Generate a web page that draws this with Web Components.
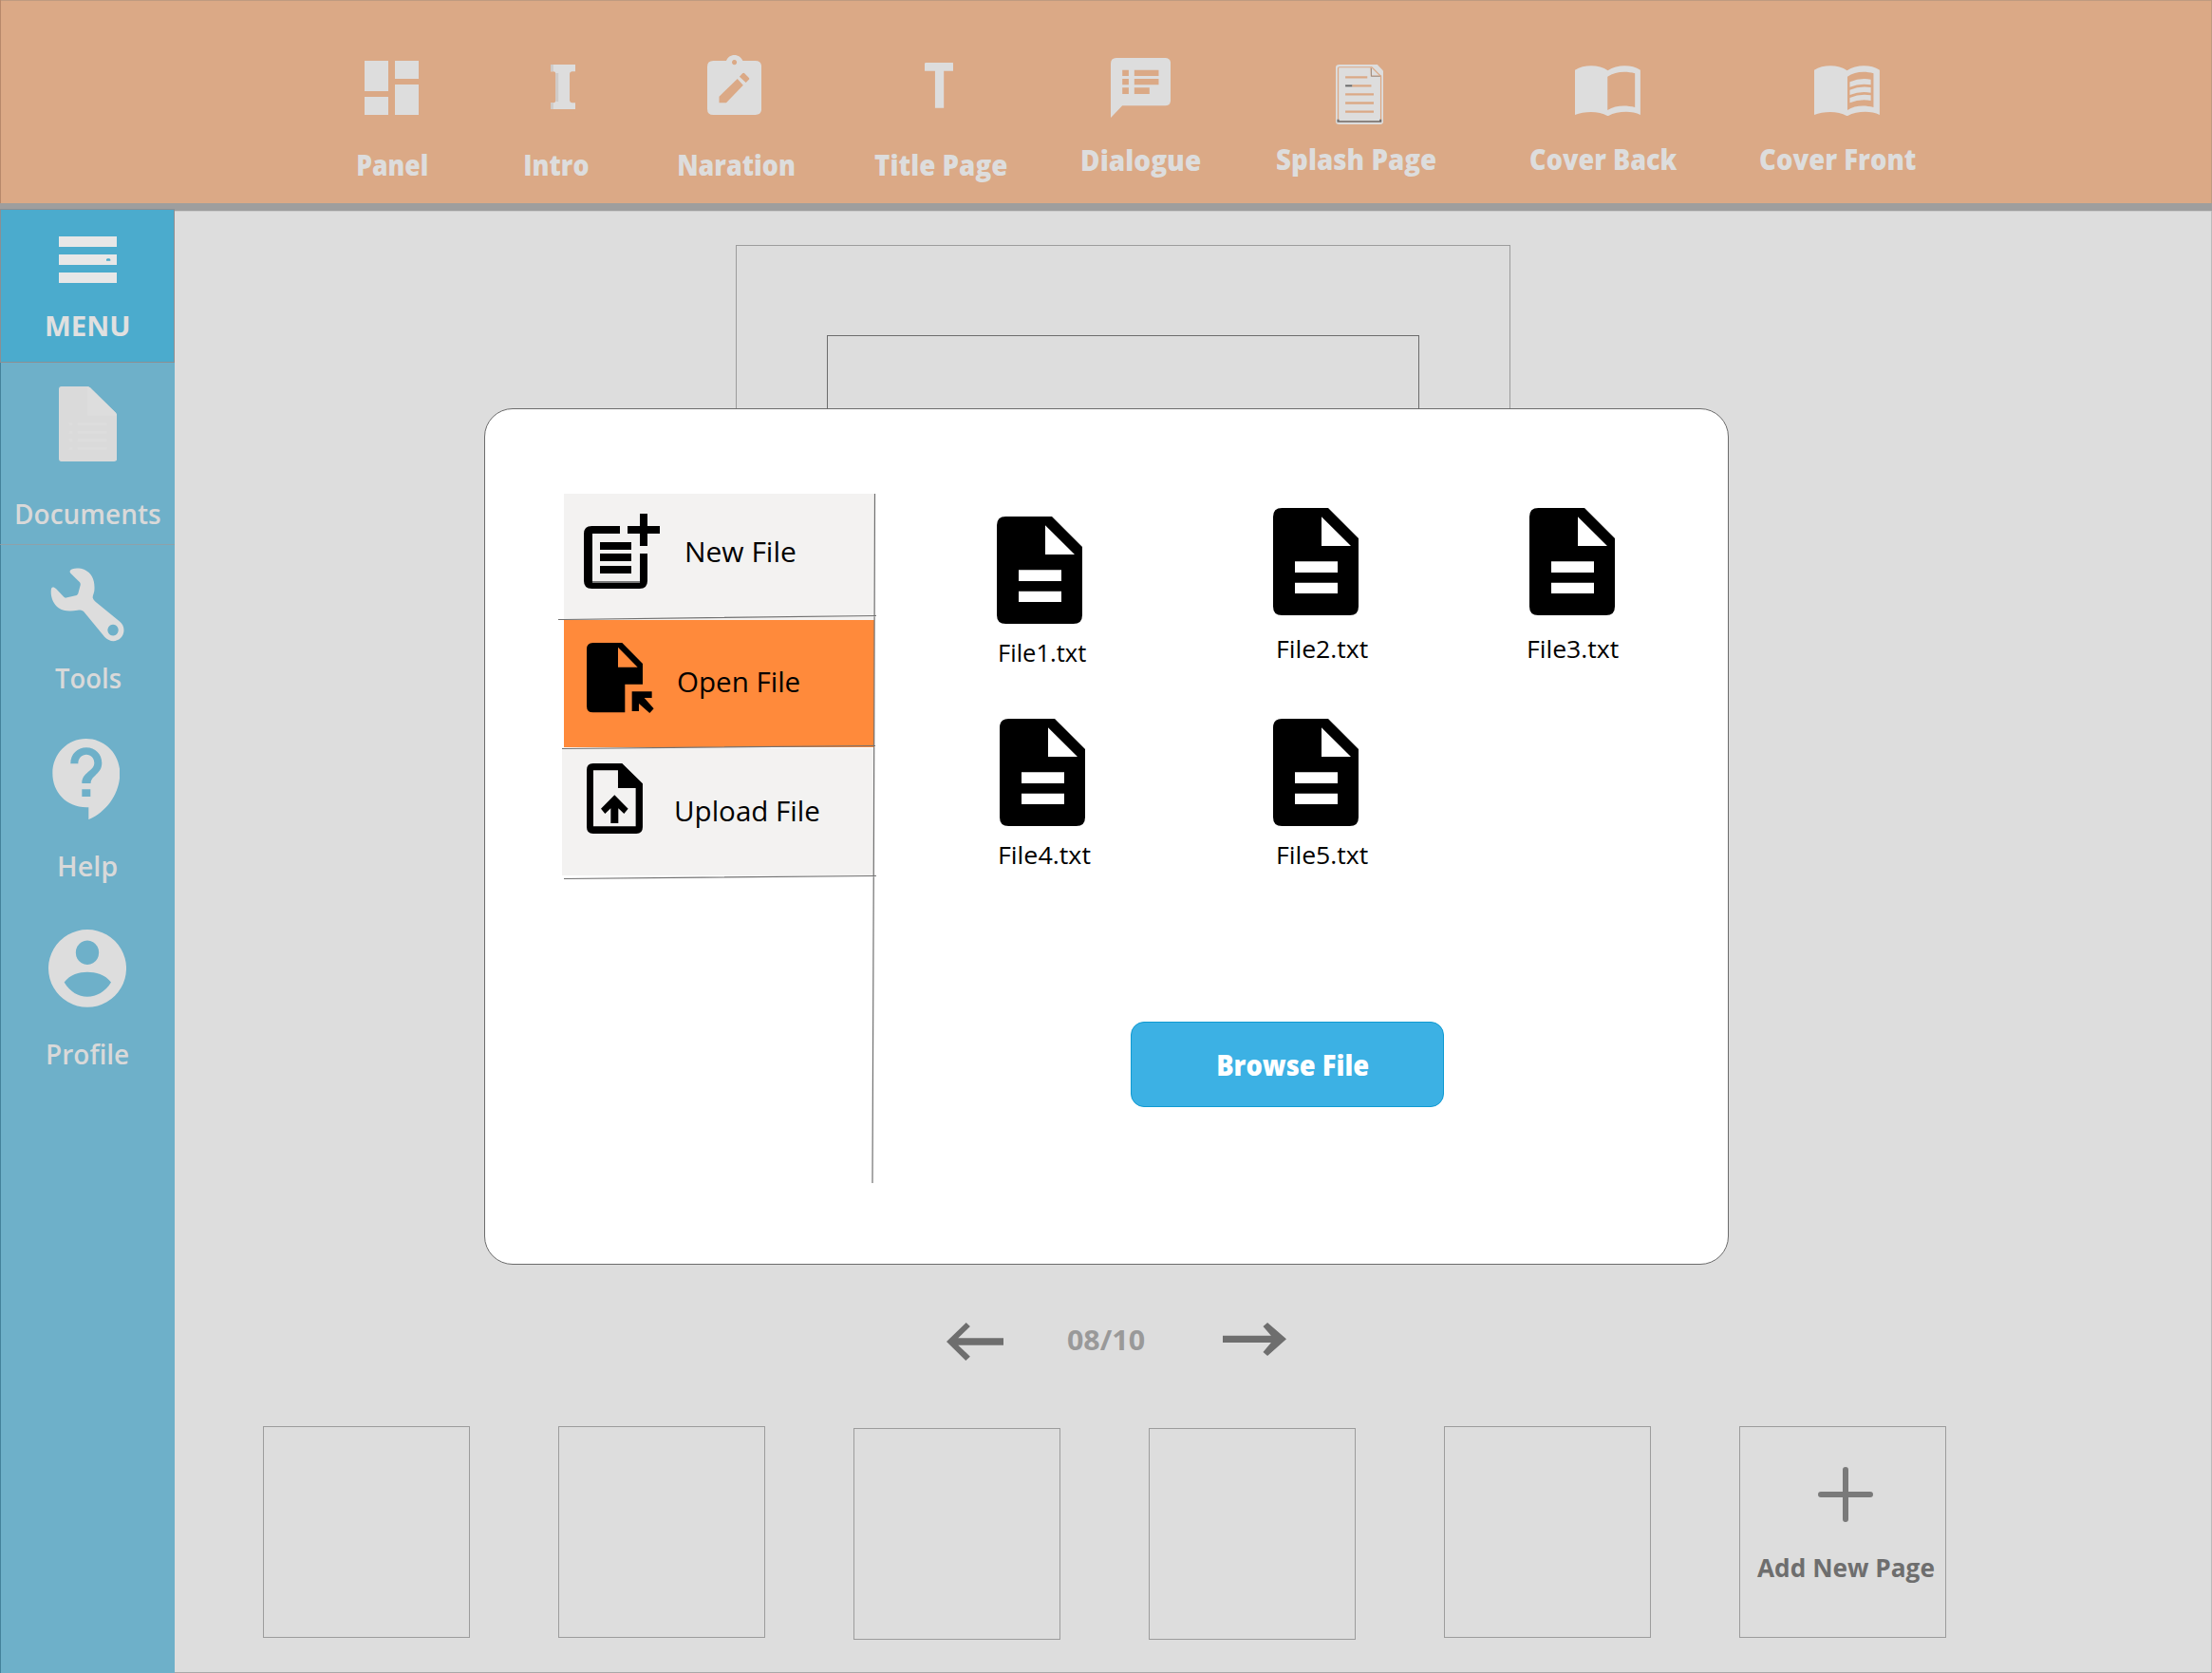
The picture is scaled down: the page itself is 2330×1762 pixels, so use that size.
<!DOCTYPE html>
<html lang="en">
<head>
<meta charset="utf-8">
<title>Comic Editor - Open File</title>
<style>
  html, body { margin: 0; padding: 0; }
  body { width: 2330px; height: 1762px; overflow: hidden; background: #ddd; font-family: "Open Sans", "Noto Sans", sans-serif; }
</style>
</head>
<body>
<comic-editor></comic-editor>
<script>
const ICONS = {
  panel: ['0 0 57 57', '<path d="M0 0H25V32H0zM0 38H25V57H0zM32 0H57V19H32zM32 25H57V57H32z"/>'],
  intro: ['672 113 73 142', '<path d="M672 113H745V135H735Q728 136 728 142V226Q728 233 735 234H745V255H672V234H681Q687 233 687 226V142Q687 136 681 135H672z"/><path d="M672 113h8v22h-8zM672 234h8v21h-8zM687 140h8v90h-8z" fill="#cfcbc8"/>'],
  naration: ['1134 81 160 189', '<path fill-rule="evenodd" d="M1152 99H1190C1194 88 1203 81 1214 81C1225 81 1234 88 1239 99H1276Q1294 99 1294 118V251Q1294 270 1276 270H1152Q1134 270 1134 251V118Q1134 99 1152 99zM1214 96a7 8 0 1 0 .1 0zM1169 212L1223 156L1240 176L1190 232H1169zM1229 149L1238 139Q1241 136 1244 139L1257 153Q1259 156 1257 158L1248 168z"/>'],
  title: ['223 108 72 143', '<path d="M226 108H292Q295 108 295 112V134H271V251H249V134H223V112Q223 108 226 108z"/>'],
  dialogue: ['689 93 150 189', '<path fill-rule="evenodd" d="M703 93H825Q839 93 839 111V225Q839 244 825 244H718L689 282V111Q689 93 703 93zM718 131V150H734V131zM748 131V150H809V131zM718 159V178H734V159zM748 159V178H809V159zM718 187V207H734V187zM748 187V207H786V187z"/>'],
  splash: ['1253 114 119 189', '<path d="M1262 114H1357L1372 134V294Q1372 303 1364 303H1262Q1253 303 1253 294V124Q1253 114 1262 114z"/><path d="M1341 122H1262Q1259 122 1259 127V294H1366V150H1342z" fill="none" stroke="#dba986" stroke-width="3"/><path d="M1342 121L1366 151" stroke="#dba986" stroke-width="3"/><path d="M1342 126V151H1364" fill="none" stroke="#8c8580" stroke-width="2"/><path d="M1277 154H1332M1294 181H1342M1277 208H1348M1277 235.500H1348M1277 263H1348" stroke="#dba986" stroke-width="7"/><path d="M1277 181H1294" stroke="#6b6b6b" stroke-width="6"/><path d="M1259 287V294H1365V287" fill="none" stroke="#707070" stroke-width="5"/>'],
  coverBack: ['333 116 193 160', '<path fill-rule="evenodd" d="M333 130C360 112 405 112 430 132C457 112 500 112 526 130V272C500 258 457 260 430 276C405 258 360 260 333 272zM429 151V257C452 242 480 240 510 248V141C482 133 452 135 429 151z"/>'],
  coverFront: ['333 116 193 160', '<path fill-rule="evenodd" d="M333 130C360 112 405 112 430 132C457 112 500 112 526 130V272C500 258 457 260 430 276C405 258 360 260 333 272zM431 151V257C452 242 480 240 508 248V141C482 133 452 135 431 151z"/><path d="M438 168Q468 154 500 160V177Q468 171 438 184zM438 193Q468 179 500 185V202Q468 196 438 209zM438 218Q468 204 500 210V227Q468 221 438 234z"/>'],
  menu: ['185 147 184 147', '<path fill-rule="evenodd" d="M185 147H369V180H185zM185 204H369V237H185zM185 261H369V294H185zM335 224V220L338 217H345L348 220V224z"/>'],
  document: ['184 621 184 237', '<path fill="#dadada" d="M192 621H274Q279 621 283 625L364 704Q368 708 368 713V849Q368 858 359 858H192Q184 858 184 849V630Q184 621 192 621z"/><path fill="#dddddd" d="M274 622V713H367L364 704L283 625z"/><path stroke="#dddddd" stroke-width="8" d="M216 740H228M243 740H336M216 766H228M243 766H336M216 791H228M243 791H336M216 817H228M243 817H336"/>'],
  wrench: ['160 72 236 216', '<path fill-rule="evenodd" d="M222 84C226 75 250 74 268 80C292 90 302 112 299 140C297 150 294 152 294 160C296 168 302 170 310 177L378 227C396 238 397 262 382 275C366 288 346 285 332 272L269 203C262 195 256 194 246 196C220 199 200 198 186 189C168 177 159 155 163 134C166 128 172 129 178 134L203 158Q206 161 210 160L243 153Q247 151 248 148L255 124Q256 119 253 116L224 90Q221 87 222 84zM358 236a17 16 0 1 0 .1 0z"/>'],
  help: ['164 562 214 230', '<path fill-rule="evenodd" d="M271 562C330 562 378 605 378 660C378 715 340 768 279 792V757C210 760 165 715 165 660C165 605 213 562 271 562zM222 633H246C246 617 258 607 272 607C286 607 297 617 297 631C297 655 258 657 258 689H286C286 667 321 663 321 631C321 606 300 587 272 587C244 587 222 605 222 633zM258 706V727H285V706z"/>'],
  profile: ['153 1106 246 221', '<path fill-rule="evenodd" d="M276 1106a123 110.500 0 1 0 .1 0zM276 1137a36.500 34.500 0 1 1 -.1 0zM203 1256C222 1234 250 1227 276 1227C302 1227 332 1234 351 1256C332 1284 305 1297 276 1297C247 1297 222 1284 203 1256z"/>'],
  file: ['0 0 270 339', '<path fill-rule="evenodd" d="M28 0H174L270 96V311Q270 339 242 339H28Q0 339 0 311V28Q0 0 28 0zM153 28V120H246zM69 169V204H204V169zM69 236V270H204V236z"/>'],
  newFile: ['135 123 240 237', '<path d="M160 162H249V186H162V336H162V342H312V249H336V335Q336 360 311 360H160Q135 360 135 335V187Q135 162 160 162zM312 123H336V162H375V186H336V225H312V186H273V162H312zM186 213H285V237H186zM186 249H285V273H186zM186 288H285V312H186z"/><path d="M162 336H312V342H162z" fill="#777"/>'],
  openFile: ['143 532 214 224', '<path fill-rule="evenodd" d="M163 532H255L320 598V663H264V752H163Q143 752 143 732V552Q143 532 163 532zM242 546V609H304z"/><path d="M286 686H349V706H325L355 740L342 754L308 724V748H286z"/>'],
  uploadFile: ['143 912 178 222', '<path fill-rule="evenodd" d="M163 912H255L320 976V1113Q320 1134 300 1134H163Q143 1134 143 1113V933Q143 912 163 912zM164 934V1111H298V990H242V934z"/><path d="M231 1012L274 1055L261 1071L243 1054V1101H219V1054L201 1071L188 1055z"/>'],
  arrowLeft: ['95 1029 158 120', '<path d="M95 1089L149 1029L160 1041L127 1078H253V1100H127L160 1136L148 1149z"/>'],
  arrowRight: ['856 1029 175 105', '<path d="M856 1070H989L967 1041L979 1029L1031 1081L979 1134L967 1122L989 1092H856z"/>'],
  plus: ['0 0 58 58', '<path d="M29 3V55M3 29H55" stroke="currentColor" stroke-width="6" stroke-linecap="round"/>']
};

const define = (name, css, html, ready) => customElements.define(name, class extends HTMLElement {
  connectedCallback() {
    if (this.shadowRoot) return;
    const root = this.attachShadow({ mode: 'open' });
    const value = key => this.getAttribute(key) || '';
    root.innerHTML = `<style>${css}</style>${typeof html === 'function' ? html(value) : html}`;
    if (ready) ready(root, value, this);
  }
});

define('app-icon', ':host{display:block;flex:none} svg{display:block;width:100%;height:100%;fill:currentColor}',
  v => `<svg viewBox="${ICONS[v('name')][0]}" preserveAspectRatio="none" aria-hidden="true">${ICONS[v('name')][1]}</svg>`,
  (root, v, host) => { host.style.width = v('w') + 'px'; host.style.height = v('h') + 'px'; });

/* One-line label whose glyphs span exactly the width asked for; its baseline sits 31px below its top. */
define('fit-label', ':host{display:block;flex:none;height:40px} span{display:inline-block;white-space:pre;line-height:40px;transform-origin:0 0}',
  '<span><slot></slot></span>',
  (root, v, host) => {
    const size = +v('size') || 29.4, weight = v('weight') || 700, width = +v('w');
    const pen = document.createElement('canvas').getContext('2d');
    pen.font = `${weight} ${size}px "Open Sans"`;
    const m = pen.measureText(host.textContent.trim());
    const scale = width / (m.actualBoundingBoxLeft + m.actualBoundingBoxRight);
    host.style.cssText += `;width:${width}px;font-size:${size}px;font-weight:${weight}`;
    root.querySelector('span').style.transform =
      `translate(${m.actualBoundingBoxLeft * scale}px,${11 - 0.388 * size}px) scaleX(${scale})`;
  });

define('tool-item', ':host{display:flex;flex-direction:column;flex:none;color:#ddd}',
  v => `<app-icon name="${v('icon')}" w="${v('iw')}" h="${v('ih')}" style="margin:${v('top')}px 0 ${v('gap')}px ${v('inset')}px"></app-icon><fit-label w="${v('w')}" weight="800">${v('label')}</fit-label>`,
  (root, v, host) => { host.style.marginLeft = v('before') + 'px'; host.style.width = v('w') + 'px'; });

define('tool-bar', ':host{display:flex;align-items:flex-start;height:222px;box-sizing:border-box;background:#dba986;border-bottom:8px solid #9e9e9e;box-shadow:inset 1px 0 #b8896b,inset 0 1px #bf9a80,inset -1px 0 #bf9a80,0 1px #ccc}', '<slot></slot>');

define('side-item', ':host{display:flex;flex-direction:column;align-items:center;color:#ddd;box-sizing:border-box} :host([active]){height:162px;flex:none;background:#4babcd;border:1px solid #8b8f93;color:#e7e7e7}',
  v => `<app-icon name="${v('icon')}" w="${v('iw')}" h="${v('ih')}" style="margin:${v('top')}px ${v('shift') || 0}px ${v('gap')}px 0"></app-icon><fit-label w="${v('w')}" weight="${v('weight') || 600}" style="margin-left:${v('nudge') || 2}px;color:${v('ink') || '#d9d9d9'}">${v('label')}</fit-label>`);

define('side-bar', ':host{display:flex;flex-direction:column;width:184px;flex:none;box-sizing:border-box;background:#6eb0c9;box-shadow:inset 1px 0 #44829b;margin-top:-2px;position:relative} hr{border:0;height:1px;margin:12px 0 0;background:#9a9c9f;width:184px;opacity:.75}',
  `<side-item active icon="menu" iw="61.300" ih="49" top="28" gap="25" shift="-1" w="86.400" weight="700" nudge="1" ink="#e0e0e0" label="MENU"></side-item>
   <side-item icon="document" iw="61.300" ih="79" top="25" gap="35" shift="-1" w="152.300" nudge="3" label="Documents"></side-item>
   <hr>
   <side-item icon="wrench" iw="78.700" ih="79.900" top="22.600" gap="17.500" shift="-1" w="69.700" nudge="1" label="Tools"></side-item>
   <side-item icon="help" iw="71.300" ih="85.100" top="43.900" gap="28.600" shift="2.500" w="61" nudge="1.500" label="Help"></side-item>
   <side-item icon="profile" iw="82" ih="81.800" top="47.600" gap="29" w="85.300" label="Profile"></side-item>`);

define('page-thumb', ':host{display:flex;flex-direction:column;box-sizing:border-box;width:218px;height:223px;flex:none;border:1px solid #9c9c9c;color:#6e6e6e} :host([low]){margin-top:2px}', '<slot></slot>');

define('page-strip', ':host{display:flex;align-items:flex-start;gap:93px;padding-left:93px}',
  `<page-thumb></page-thumb><page-thumb></page-thumb><page-thumb low></page-thumb><page-thumb low></page-thumb><page-thumb></page-thumb>
   <page-thumb><app-icon name="plus" w="58" h="58" style="color:#7a7a7a;margin:42px 0 27px 82px"></app-icon><fit-label w="186" size="27" weight="700" style="margin-left:18.300px">Add New Page</fit-label></page-thumb>`);

define('page-nav', ':host{display:flex;align-items:flex-start;padding-left:812.700px;height:109px;box-sizing:border-box;color:#6e6e6e}',
  `<app-icon name="arrowLeft" w="60.500" h="40"></app-icon>
   <fit-label w="80.300" weight="700" style="color:#999;margin:-2px 82.500px 0 68.200px">08/10</fit-label>
   <app-icon name="arrowRight" w="67" h="35"></app-icon>`);

define('page-canvas', ':host{display:block;height:1171px;box-sizing:border-box;padding:36px 0 0 591px} .page{box-sizing:border-box;width:816px;height:1000px;border:1px solid #9c9c9c;padding:94px 0 0 95px} .frame{box-sizing:border-box;width:624px;height:700px;border:1px solid #6c6c6c}',
  '<div class="page"><div class="frame"></div></div>');

define('file-item', ':host{display:flex;flex-direction:column;width:90px;flex:none;color:#000}',
  v => `<app-icon name="file" w="90" h="113" style="margin-bottom:${v('gap')}px"></app-icon><fit-label w="${v('w')}" size="26" weight="500" style="margin-left:${v('inset')}px">${v('label')}</fit-label>`);

define('menu-option', ':host{display:flex;align-items:flex-start;background:#f3f2f1;color:#000;flex:none;box-sizing:border-box} :host([selected]){background:#ff8a3b}',
  v => `<app-icon name="${v('icon')}" w="${v('iw')}" h="${v('ih')}" style="margin:${v('itop')}px 0 0 ${v('ileft')}px"></app-icon><fit-label w="${v('w')}" weight="500" style="margin:${v('ltop')}px 0 0 ${v('lgap')}px">${v('label')}</fit-label>`,
  (root, v, host) => { host.style.height = v('height') + 'px'; });

define('file-menu', ':host{display:flex;flex-direction:column;width:327px;flex:none;position:relative} .rules{position:absolute;left:-6px;top:0;width:340px;height:728px} .rules path{fill:none;stroke:#707070;stroke-width:1.200}',
  `<menu-option icon="newFile" iw="80" ih="79" itop="21" ileft="21" w="114.300" lgap="28" ltop="41" height="133" label="New File"></menu-option>
   <menu-option selected icon="openFile" iw="71.300" ih="74.700" itop="24.300" ileft="23.700" w="127.700" lgap="25" ltop="45" height="134" label="Open File"></menu-option>
   <menu-option icon="uploadFile" iw="59.300" ih="74" itop="16" ileft="25.700" w="150.400" lgap="35.300" ltop="46" height="134" style="margin:1px 1px 0 -2px" label="Upload File"></menu-option>
   <svg class="rules" viewBox="0 0 340 728"><path d="M0 132.500H6L335 128.500M4 268.500L334 265.500M6 405.500L335 402.500M333.500 0L332.500 340L331 726"/></svg>`);

define('browse-button', ':host{display:block} button{display:flex;box-sizing:border-box;width:330px;height:90px;padding:25px 0 0 90.500px;margin:0;border:1px solid #0f9ad2;border-radius:14px;background:#3cb1e4;color:#fff;font-family:inherit;text-align:left;align-items:flex-start}',
  v => `<button type="button"><fit-label w="158.100" weight="800">${v('label')}</fit-label></button>`);

define('file-dialog', ':host{display:flex;align-items:flex-start;position:absolute;left:510px;top:430px;width:1311px;height:902px;box-sizing:border-box;background:#fff;border:1px solid #6c6c6c;border-radius:30px;padding:89px 0 0 83px} .files{display:flex;flex-direction:column;margin-left:129px} .row{display:flex;align-items:flex-start;height:222px;padding-top:15px;box-sizing:border-box}',
  `<file-menu></file-menu>
   <div class="files">
     <div class="row">
       <file-item label="File1.txt" w="91" gap="8.700" inset="3" style="margin-top:9px"></file-item>
       <file-item label="File2.txt" w="95" gap="14" inset="4.700" style="margin-left:201px"></file-item>
       <file-item label="File3.txt" w="95" gap="14" inset="-1.300" style="margin-left:180px"></file-item>
     </div>
     <div class="row">
       <file-item label="File4.txt" w="95.700" gap="8.700" inset="0" style="margin-left:3px"></file-item>
       <file-item label="File5.txt" w="95" gap="8.700" inset="4.700" style="margin-left:198px"></file-item>
     </div>
     <browse-button style="margin:112px 0 0 141px" label="Browse File"></browse-button>
   </div>`);

define('comic-editor', ':host{display:flex;flex-direction:column;width:2330px;height:1762px;position:relative;background:#ddd} .body{display:flex;flex:1;min-height:0} main{display:flex;flex-direction:column;flex:1;box-shadow:inset -1px 0 #bbb,inset 0 -1px #a8a8a8}',
  `<tool-bar>
     <tool-item icon="panel" iw="57" ih="57" top="64" gap="33" inset="7" before="377" w="73" label="Panel"></tool-item>
     <tool-item icon="intro" iw="26.100" ih="47.300" top="67.700" gap="39" inset="26.800" before="103.200" w="66.800" label="Intro"></tool-item>
     <tool-item icon="naration" iw="57.100" ih="63" top="57.500" gap="33.500" inset="30" before="95" w="121.400" label="Naration"></tool-item>
     <tool-item icon="title" iw="30.300" ih="47.700" top="66" gap="40.300" inset="53.100" before="84.400" w="139.300" label="Title Page"></tool-item>
     <tool-item icon="dialogue" iw="63.100" ih="63" top="61" gap="25" inset="30.300" before="79.600" w="124.100" label="Dialogue"></tool-item>
     <tool-item icon="splash" iw="50.100" ih="63" top="68" gap="17" inset="62.700" before="80.900" w="167.100" label="Splash Page"></tool-item>
     <tool-item icon="coverBack" iw="68.900" ih="53.300" top="68.700" gap="26" inset="46.400" before="100.700" w="155" label="Cover Back"></tool-item>
     <tool-item icon="coverFront" iw="68.900" ih="53.300" top="68.700" gap="26" inset="57.200" before="86.400" w="164" label="Cover Front"></tool-item>
   </tool-bar>
   <div class="body">
     <side-bar></side-bar>
     <main><page-canvas></page-canvas><page-nav></page-nav><page-strip></page-strip></main>
   </div>
   <file-dialog></file-dialog>`);
</script>
</body>
</html>
